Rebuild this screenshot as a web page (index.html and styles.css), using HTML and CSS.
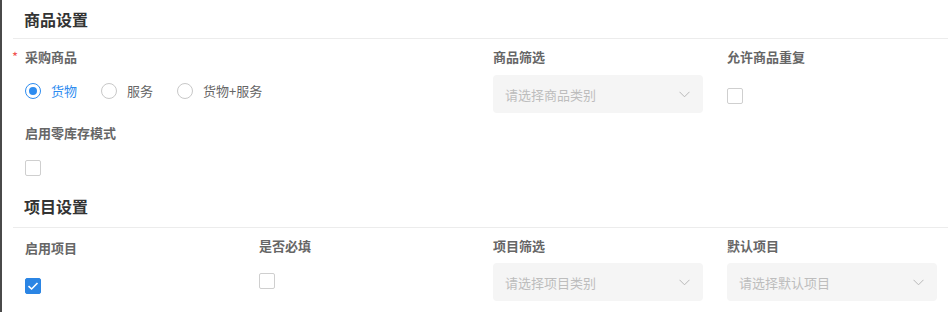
FILE: index.html
```html
<!DOCTYPE html>
<html lang="zh">
<head>
<meta charset="utf-8">
<link rel="stylesheet" href="styles.css">
</head>
<body>
<div class="page">
  <div class="section-head"><span class="section-title">商品设置</span></div>
  <div class="form-grid">
    <div class="item span2">
      <div class="label"><span class="req">*</span>采购商品</div>
      <div class="control radios">
        <label class="radio checked"><span class="dot"></span><span>货物</span></label>
        <label class="radio"><span class="dot"></span><span>服务</span></label>
        <label class="radio"><span class="dot"></span><span>货物+服务</span></label>
      </div>
    </div>
    <div class="item">
      <div class="label">商品筛选</div>
      <div class="control">
        <div class="select"><span>请选择商品类别</span>
          <svg class="chev" width="11" height="7" viewBox="0 0 11 7"><path d="M0.5 0.8 L5.5 5.8 L10.5 0.8" fill="none" stroke="#b8b8b8" stroke-width="1"/></svg>
        </div>
      </div>
    </div>
    <div class="item">
      <div class="label">允许商品重复</div>
      <div class="control"><span class="checkbox cb-top"></span></div>
    </div>
    <div class="item">
      <div class="label">启用零库存模式</div>
      <div class="control"><span class="checkbox cb-mid"></span></div>
    </div>
  </div>

  <div class="section-head second"><span class="section-title">项目设置</span></div>
  <div class="form-grid lower">
    <div class="item shifted">
      <div class="label">启用项目</div>
      <div class="control"><span class="checkbox checked"><svg width="12" height="10" viewBox="0 0 12 10"><path d="M1.5 5.2 L4.6 8 L10.5 2" fill="none" stroke="#fff" stroke-width="1.6"/></svg></span></div>
    </div>
    <div class="item">
      <div class="label">是否必填</div>
      <div class="control"><span class="checkbox cb-up"></span></div>
    </div>
    <div class="item">
      <div class="label">项目筛选</div>
      <div class="control">
        <div class="select"><span>请选择项目类别</span>
          <svg class="chev" width="11" height="7" viewBox="0 0 11 7"><path d="M0.5 0.8 L5.5 5.8 L10.5 0.8" fill="none" stroke="#b8b8b8" stroke-width="1"/></svg>
        </div>
      </div>
    </div>
    <div class="item">
      <div class="label">默认项目</div>
      <div class="control">
        <div class="select"><span>请选择默认项目</span>
          <svg class="chev" width="11" height="7" viewBox="0 0 11 7"><path d="M0.5 0.8 L5.5 5.8 L10.5 0.8" fill="none" stroke="#b8b8b8" stroke-width="1"/></svg>
        </div>
      </div>
    </div>
  </div>
</div>
</body>
</html>
```
FILE: styles.css
```css
html, body {
  margin: 0;
  padding: 0;
  background: #fff;
}
body {
  font-family: "Noto Sans CJK SC", "Noto Sans", sans-serif;
  color: #333;
}
.page {
  border-left: 2px solid #4a4a4a;
  min-height: 312px;
  box-sizing: border-box;
}
.section-head {
  margin: 0 4px 0 11px;
  padding: 7px 0 0 11px;
  height: 31px;
  border-bottom: 1px solid #ececec;
}
.section-head.second {
  padding-top: 5px;
  height: 33px;
}
.section-title {
  font-size: 16px;
  line-height: 22px;
  font-weight: 700;
  color: #333;
}
.form-grid {
  display: grid;
  grid-template-columns: repeat(4, 210px);
  column-gap: 24px;
  row-gap: 10px;
  padding: 8px 0 0 23px;
}
.item {
  display: flex;
  flex-direction: column;
}
.span2 {
  grid-column: span 2;
}
.label {
  font-size: 13px;
  line-height: 20px;
  font-weight: 600;
  color: #666;
  margin-bottom: 8px;
}
.lower .label {
  margin-bottom: 7px;
}
.req {
  color: #f0524f;
  font-weight: 400;
  font-size: 13px;
  margin-left: -13px;
  display: inline-block;
  width: 13px;
}
.control {
  height: 38px;
  display: flex;
  align-items: center;
}
.radios {
  gap: 24px;
  align-items: flex-start;
  padding-top: 8px;
  box-sizing: border-box;
}
.radio {
  display: flex;
  align-items: center;
  gap: 10px;
  font-size: 13px;
  line-height: 16px;
  color: #666;
}
.radio .dot {
  width: 16px;
  height: 16px;
  box-sizing: border-box;
  border: 1px solid #c8c8c8;
  border-radius: 50%;
  display: flex;
  align-items: center;
  justify-content: center;
}
.radio.checked {
  color: #2d8cf0;
}
.radio.checked .dot {
  border-color: #2d8cf0;
}
.radio.checked .dot::after {
  content: "";
  width: 8px;
  height: 8px;
  border-radius: 50%;
  background: #2d8cf0;
}
.select {
  width: 210px;
  height: 38px;
  box-sizing: border-box;
  background: #f5f5f5;
  border-radius: 4px;
  padding: 0 13px 0 12px;
  display: flex;
  align-items: center;
  justify-content: space-between;
  font-size: 13px;
  color: #bdbdbd;
}
.checkbox {
  width: 16px;
  height: 16px;
  box-sizing: border-box;
  border: 1px solid #cfcfcf;
  border-radius: 2px;
  background: #fff;
  display: flex;
  align-items: center;
  justify-content: center;
}
.checkbox.checked {
  background: #2b85e4;
  border-color: #2b85e4;
}
.cb-top {
  margin-top: 4px;
}
.cb-mid {
  margin-top: -4px;
}
.cb-up {
  margin-top: -3px;
}
.shifted .label {
  margin-top: 2px;
}
.shifted .checkbox {
  margin-top: 4px;
}
```
